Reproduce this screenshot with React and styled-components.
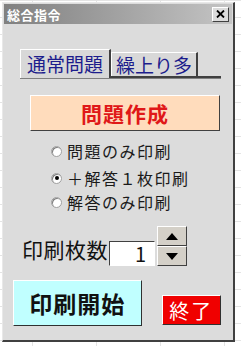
import React, { useState } from "react";
import styled, { createGlobalStyle } from "styled-components";

const GlobalStyle = createGlobalStyle`
  body {
    margin: 0;
    background: #ffffff;
    font-family: "Noto Sans CJK JP", "Liberation Sans", sans-serif;
  }
`;

const Page = styled.div`
  width: 241px;
  height: 346px;
  padding: 2px 0 0 2px;
  box-sizing: border-box;
  background-color: #ffffff;
  background-image: linear-gradient(#e4e4e4 1px, transparent 1px),
    linear-gradient(90deg, #e4e4e4 1px, transparent 1px);
  background-size: 64px 17px;
  background-position: 32px 0;
`;

const Window = styled.div`
  width: 233px;
  height: 340px;
  box-sizing: border-box;
  background: #dcdcdc;
  border-top: 1px solid #e8e8e8;
  border-left: 1px solid #e8e8e8;
  border-right: 2px solid #404040;
  border-bottom: 2px solid #404040;
  display: flex;
  flex-direction: column;
`;

const TitleBar = styled.div`
  height: 20px;
  margin: 1px;
  background: linear-gradient(90deg, #808080, #c4c4c4);
  display: flex;
  align-items: center;
  justify-content: space-between;
  padding: 0 3px 0 3px;
`;

const Title = styled.span`
  color: #ffffff;
  font-weight: bold;
  font-size: 13px;
  letter-spacing: 0.5px;
`;

const CloseBox = styled.div`
  width: 15px;
  height: 13px;
  background: #dcdcdc;
  border: 1px solid;
  border-color: #ffffff #404040 #404040 #ffffff;
  display: flex;
  align-items: center;
  justify-content: center;
`;

const Body = styled.div`
  flex: 1;
  display: flex;
  flex-direction: column;
  padding: 24px 12px 0 17px;
`;

const TabRow = styled.div`
  display: flex;
  align-items: flex-end;
  width: 201px;
  border-bottom: 2px solid #404040;
  box-shadow: 0 1px 0 #808080;
  position: relative;
`;

const Tab = styled.div`
  height: ${(p) => (p.$active ? "28px" : "23px")};
  padding: 0 ${(p) => (p.$active ? "6px" : "4px")};
  background: #d8d8d8;
  border-top: 1px solid #ffffff;
  border-left: 1px solid #ffffff;
  border-right: 2px solid #404040;
  color: #1c1c8c;
  font-size: 19px;
  line-height: ${(p) => (p.$active ? "28px" : "23px")};
  margin-bottom: ${(p) => (p.$active ? "-2px" : "0")};
  z-index: ${(p) => (p.$active ? 1 : 0)};
  white-space: nowrap;
`;

const MakeButton = styled.div`
  margin: 17px 0 0 10px;
  width: 190px;
  height: 36px;
  box-sizing: border-box;
  background: #ffdcbc;
  border: 1px solid;
  border-color: #ffffff #404040 #404040 #ffffff;
  color: #e01818;
  font-weight: bold;
  font-size: 21px;
  display: flex;
  align-items: center;
  justify-content: center;
  letter-spacing: 1px;
`;

const RadioList = styled.div`
  display: flex;
  flex-direction: column;
  margin: 10px 0 0 31px;
`;

const RadioRow = styled.label`
  display: flex;
  align-items: center;
  gap: 5px;
  height: 20px;
  line-height: 20px;
  margin-top: ${(p) => p.$gap || "0"};
  font-size: 16px;
  letter-spacing: 1.5px;
  color: #1a1a1a;
`;

const RadioDot = styled.span`
  width: 9px;
  height: 9px;
  border-radius: 50%;
  background: #ffffff;
  border: 1px solid #a0a0a0;
  box-shadow: inset 1px 1px 0 #808080;
  display: flex;
  align-items: center;
  justify-content: center;
  &::after {
    content: "";
    width: 4px;
    height: 4px;
    border-radius: 50%;
    background: ${(p) => (p.$checked ? "#000" : "transparent")};
  }
`;

const CountRow = styled.div`
  display: flex;
  align-items: flex-start;
  margin: 14px 0 0 2px;
`;

const CountLabel = styled.span`
  font-size: 21px;
  color: #111;
  margin-top: 8px;
  letter-spacing: 0.5px;
`;

const CountBox = styled.div`
  width: 46px;
  height: 25px;
  margin-top: 15px;
  margin-left: 1px;
  box-sizing: border-box;
  background: #ffffff;
  border: 1px solid;
  border-color: #404040 #ffffff #ffffff #404040;
  font-size: 20px;
  text-align: right;
  padding-right: 8px;
  line-height: 23px;
  color: #111;
`;

const Spinner = styled.div`
  display: flex;
  flex-direction: column;
  margin-left: 2px;
`;

const SpinButton = styled.div`
  width: 30px;
  height: 20px;
  box-sizing: border-box;
  background: #d4d0c8;
  border: 1px solid;
  border-color: #ffffff #404040 #404040 #ffffff;
  display: flex;
  align-items: center;
  justify-content: center;
`;

const BottomRow = styled.div`
  display: flex;
  align-items: flex-end;
  margin: 14px 0 0 -7px;
`;

const StartButton = styled.div`
  width: 134px;
  height: 46px;
  box-sizing: border-box;
  background: #c0ffff;
  border: 1px solid;
  border-color: #ffffff #303030 #303030 #ffffff;
  font-weight: bold;
  font-size: 23px;
  color: #111;
  display: flex;
  align-items: center;
  justify-content: center;
  letter-spacing: 1px;
`;

const QuitButton = styled.div`
  width: 62px;
  height: 30px;
  margin-left: 20px;
  margin-bottom: 1px;
  box-sizing: border-box;
  background: #f00000;
  border: 1px solid;
  border-color: #ffffff #303030 #303030 #ffffff;
  color: #ffffff;
  font-size: 20px;
  display: flex;
  align-items: center;
  justify-content: center;
  letter-spacing: 2px;
`;

const options = [
  { label: "問題のみ印刷", gap: "0" },
  { label: "＋解答１枚印刷", gap: "7px" },
  { label: "解答のみ印刷", gap: "4px" },
];

export default function App() {
  const [choice] = useState(1);
  return (
    <>
      <GlobalStyle />
      <Page>
        <Window>
          <TitleBar>
            <Title>総合指令</Title>
            <CloseBox>
              <svg width="9" height="8" viewBox="0 0 9 8">
                <path d="M1 0.5 L8 7.5 M8 0.5 L1 7.5" stroke="#000" strokeWidth="1.8" />
              </svg>
            </CloseBox>
          </TitleBar>
          <Body>
            <TabRow>
              <Tab $active>通常問題</Tab>
              <Tab>繰上り多</Tab>
            </TabRow>
            <MakeButton>問題作成</MakeButton>
            <RadioList>
              {options.map((o, i) => (
                <RadioRow key={o.label} $gap={o.gap}>
                  <RadioDot $checked={i === choice} />
                  {o.label}
                </RadioRow>
              ))}
            </RadioList>
            <CountRow>
              <CountLabel>印刷枚数</CountLabel>
              <CountBox>1</CountBox>
              <Spinner>
                <SpinButton>
                  <svg width="12" height="7" viewBox="0 0 12 7">
                    <path d="M6 0 L12 7 L0 7 Z" fill="#000" />
                  </svg>
                </SpinButton>
                <SpinButton>
                  <svg width="12" height="7" viewBox="0 0 12 7">
                    <path d="M0 0 L12 0 L6 7 Z" fill="#000" />
                  </svg>
                </SpinButton>
              </Spinner>
            </CountRow>
            <BottomRow>
              <StartButton>印刷開始</StartButton>
              <QuitButton>終了</QuitButton>
            </BottomRow>
          </Body>
        </Window>
      </Page>
    </>
  );
}
